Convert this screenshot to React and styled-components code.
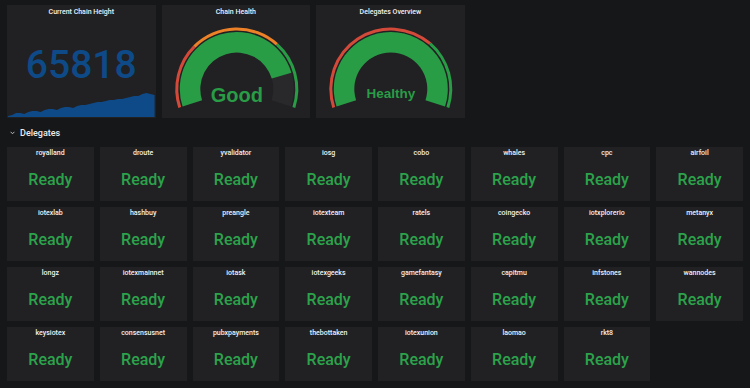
import React from 'react';
import styled, { createGlobalStyle } from 'styled-components';

const GlobalStyle = createGlobalStyle`
  html, body {
    margin: 0;
    padding: 0;
    background: #161719;
  }
  body {
    font-family: Roboto, "Noto Sans", "Liberation Sans", sans-serif;
    color: #d8d9da;
  }
`;

const GREEN = '#299c46';
const TEXT_GREEN = '#2ca34b';
const RED = '#d44a3a';
const ORANGE = '#ed8128';
const BLUE = '#0e4a88';

const Page = styled.div`
  width: 750px;
  height: 388px;
  box-sizing: border-box;
  padding: 5px 7px 0;
  overflow: hidden;
`;

const TopRow = styled.div`
  display: grid;
  grid-template-columns: repeat(24, 1fr);
  column-gap: 6px;
`;

const Panel = styled.div`
  position: relative;
  grid-column: span 5;
  height: 113px;
  background: #212124;
  display: flex;
  flex-direction: column;
  overflow: hidden;
`;

const PanelTitle = styled.div`
  height: 14px;
  line-height: 14px;
  text-align: center;
  font-size: 7px;
  font-weight: 500;
  color: #f2f2f2;
`;

const StatValue = styled.div`
  position: relative;
  z-index: 1;
  margin-top: 26px;
  text-align: center;
  font-size: 39px;
  line-height: 40px;
  font-weight: 500;
  color: ${BLUE};
`;

const Spark = styled.svg`
  position: absolute;
  left: 1px;
  right: 1px;
  bottom: 1px;
  width: calc(100% - 2px);
  height: 30px;
`;

const GaugeSvg = styled.svg`
  display: block;
  width: 100%;
  height: 99px;
`;

const SectionHeader = styled.div`
  height: 29px;
  display: flex;
  align-items: center;
  gap: 5px;
  padding-left: 3px;
  font-size: 9px;
  font-weight: 500;
  color: #ececec;
`;

const DelegateGrid = styled.div`
  display: grid;
  grid-template-columns: repeat(8, 1fr);
  grid-auto-rows: 54px;
  gap: 6px;
`;

const Cell = styled.div`
  background: #212124;
  display: flex;
  flex-direction: column;
  align-items: center;
`;

const CellName = styled.div`
  height: 12px;
  line-height: 12px;
  font-size: 7px;
  font-weight: 500;
  color: #f2f2f2;
`;

const CellValue = styled.div`
  margin-top: 13px;
  font-size: 16px;
  line-height: 16px;
  font-weight: 500;
  color: ${(p) => p.color || TEXT_GREEN};
`;

const pt = (cx, cy, r, a) => {
  const rad = (a * Math.PI) / 180;
  return [cx + r * Math.cos(rad), cy - r * Math.sin(rad)];
};

const arc = (cx, cy, r1, r2, a0, a1) => {
  const [x0, y0] = pt(cx, cy, r2, a0);
  const [x1, y1] = pt(cx, cy, r2, a1);
  const [x2, y2] = pt(cx, cy, r1, a1);
  const [x3, y3] = pt(cx, cy, r1, a0);
  const large = Math.abs(a0 - a1) > 180 ? 1 : 0;
  return `M${x0} ${y0} A${r2} ${r2} 0 ${large} 1 ${x1} ${y1} L${x2} ${y2} A${r1} ${r1} 0 ${large} 0 ${x3} ${y3} Z`;
};

const START = 198;
const END = -18;

function Gauge({ bands, value, text, fontSize }) {
  const cx = 74.5;
  const cy = 70;
  const valueEnd = START - (START - END) * value;
  return (
    <GaugeSvg viewBox="0 0 148 99">
      {bands.map((b, i) => (
        <path key={i} d={arc(cx, cy, 58.5, 61.5, b.from, b.to)} fill={b.color} />
      ))}
      <path d={arc(cx, cy, 36.5, 57, START, END)} fill="#29292c" />
      <path d={arc(cx, cy, 36.5, 57, START, valueEnd)} fill={GREEN} />
      <text
        x={cx}
        y={text.y}
        textAnchor="middle"
        fontFamily="'Liberation Sans', Arial, sans-serif"
        fontWeight="bold"
        fontSize={fontSize}
        fill={GREEN}
      >
        {text.label}
      </text>
    </GaugeSvg>
  );
}

const heights = [1, 2, 4, 4, 3, 5, 6, 6, 5, 7, 8, 8, 7, 9, 10, 10, 9, 11, 12, 12, 13, 14, 15, 15, 16, 17, 17, 18, 18, 19, 20, 21, 21, 23, 24, 23, 22];

function Sparkline() {
  const w = 146;
  const h = 30;
  const step = w / (heights.length - 1);
  const line = heights.map((v, i) => `${(i * step).toFixed(1)},${(h - v).toFixed(1)}`).join(' ');
  return (
    <Spark viewBox={`0 0 ${w} ${h}`} preserveAspectRatio="none">
      <polygon points={`0,${h} ${line} ${w},${h}`} fill={BLUE} />
    </Spark>
  );
}

const delegates = [
  'royalland', 'droute', 'yvalidator', 'iosg', 'cobo', 'whales', 'cpc', 'airfoil',
  'iotexlab', 'hashbuy', 'preangle', 'iotexteam', 'ratels', 'coingecko', 'iotxplorerio', 'metanyx',
  'longz', 'iotexmainnet', 'iotask', 'iotexgeeks', 'gamefantasy', 'capitmu', 'infstones', 'wannodes',
  'keysiotex', 'consensusnet', 'pubxpayments', 'thebottaken', 'iotexunion', 'laomao', 'rkt8',
];

export default function App() {
  return (
    <Page>
      <GlobalStyle />
      <TopRow>
        <Panel>
          <PanelTitle>Current Chain Height</PanelTitle>
          <StatValue>65818</StatValue>
          <Sparkline />
        </Panel>
        <Panel>
          <PanelTitle>Chain Health</PanelTitle>
          <Gauge
            bands={[
              { from: START, to: 135, color: RED },
              { from: 135, to: 48, color: ORANGE },
              { from: 48, to: END, color: GREEN },
            ]}
            value={0.84}
            fontSize={20}
            text={{ label: 'Good', y: 82.7 }}
          />
        </Panel>
        <Panel>
          <PanelTitle>Delegates Overview</PanelTitle>
          <Gauge
            bands={[
              { from: START, to: 49, color: RED },
              { from: 49, to: END, color: GREEN },
            ]}
            value={1}
            fontSize={13.5}
            text={{ label: 'Healthy', y: 78.7 }}
          />
        </Panel>
      </TopRow>
      <SectionHeader>
        <svg width="5" height="4" viewBox="0 0 5 4">
          <path d="M0.6 0.8 L2.5 2.8 L4.4 0.8" stroke="#c8c9ca" strokeWidth="0.9" fill="none" />
        </svg>
        Delegates
      </SectionHeader>
      <DelegateGrid>
        {delegates.map((name) => (
          <Cell key={name}>
            <CellName>{name}</CellName>
            <CellValue>Ready</CellValue>
          </Cell>
        ))}
      </DelegateGrid>
    </Page>
  );
}
